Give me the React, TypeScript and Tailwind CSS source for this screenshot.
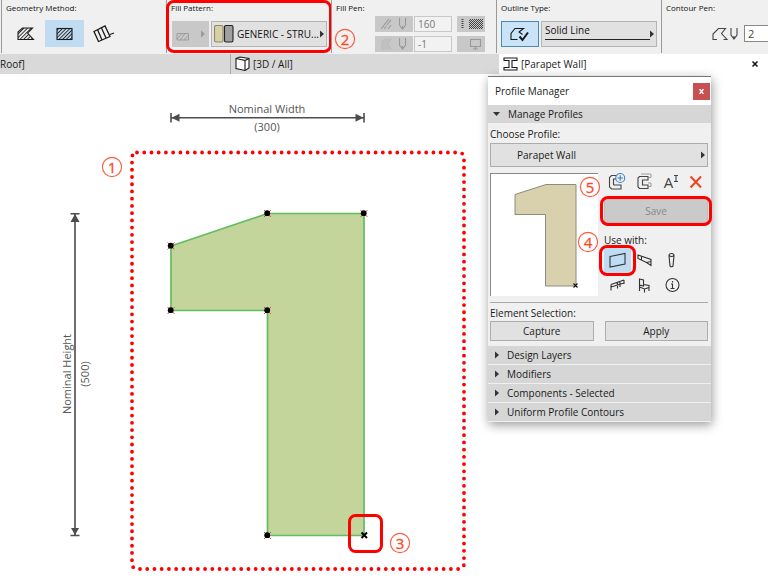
import { useState } from "react";
import type { ReactNode } from "react";

function Arrow({ className = "" }: { className?: string }) {
  return (
    <svg width="4" height="8" viewBox="0 0 4 8" className={`shrink-0 ${className}`} aria-hidden="true">
      <path d="M0 0.5 L4 4 L0 7.5Z" fill="currentColor" />
    </svg>
  );
}

function Callout({ n, x, y, className }: { n: number; x?: number; y?: number; className?: string }) {
  return (
    <svg x={x} y={y} width="22" height="22" viewBox="0 0 22 22" className={className}>
      <circle cx="11" cy="11" r="9.6" fill="none" stroke="#fb5a3c" strokeWidth="1.1" />
      <text x="11" y="16.5" textAnchor="middle" fontSize="15" fill="#fb4a2a" stroke="#fb4a2a" strokeWidth="0.3">
        {n}
      </text>
    </svg>
  );
}

function Icon({ w, h, children }: { w: number; h: number; children: ReactNode }) {
  return (
    <svg
      width={w}
      height={h}
      viewBox={`0 0 ${w} ${h}`}
      fill="none"
      stroke="currentColor"
      strokeWidth="1.1"
      className="shrink-0"
      aria-hidden="true"
    >
      {children}
    </svg>
  );
}

const Pen = () => <path d="M0.5 0 V7 L3.5 11 L6.5 7 V0 M3.5 8 V11" />;

function Group({ title, className, children }: { title: string; className: string; children: ReactNode }) {
  return (
    <section className={`relative flex h-[53px] shrink-0 border-l border-[#9a9a9a] pl-1 ${className}`}>
      <div className="flex w-full flex-col">
        <h2 className="h-4 text-[8px] leading-4 whitespace-nowrap text-[#111]">{title}</h2>
        {children}
      </div>
    </section>
  );
}

function Toolbar() {
  const [method, setMethod] = useState(1);
  const methods = [
    {
      name: "Polygonal",
      icon: (
        <Icon w={18} h={14}>
          <path d="M1 12.5 V5 L5.5 1 H15.5 L10.5 6 L16.5 12.5Z" fill="url(#hatch)" />
        </Icon>
      ),
    },
    {
      name: "Rectangular",
      icon: (
        <Icon w={18} h={14}>
          <rect x="1" y="1.5" width="15" height="11" fill="url(#hatch)" />
        </Icon>
      ),
    },
    {
      name: "Rotated rectangular",
      icon: (
        <Icon w={22} h={18}>
          <path d="M1 6.5 L12 1 L17 11.5 L5.5 16.5Z M4.5 4.5 L9 15 M8.5 3 L13 13" strokeWidth="1.3" />
          <path d="M17 9.5 L21 8" />
        </Icon>
      ),
    },
  ];

  return (
    <header className="flex h-[54px] overflow-hidden bg-[#f0f0f0]">
      <Group title="Geometry Method:" className="ml-px w-[165px]">
        <div className="flex pt-1">
          {methods.map((m, i) => (
            <button
              key={m.name}
              type="button"
              aria-label={m.name}
              onClick={() => setMethod(i)}
              className={`flex h-[27px] w-[39px] items-center justify-center ${i === method ? "bg-[#bfdcf2]" : ""}`}
            >
              {m.icon}
            </button>
          ))}
        </div>
      </Group>

      <Group title="Fill Pattern:" className="w-[165px]">
        <div className="flex gap-[2px] pt-[5px] pr-1 pl-px">
          <button
            type="button"
            disabled
            aria-label="Fill type"
            className="flex h-[26px] w-[37px] items-center justify-between bg-[#c8c8c8] pr-1 pl-1 text-[#999]"
          >
            <Icon w={14} h={14}>
              <path d="M1 6.5 H12.5 V13 H1Z M1 12 L6 6.5 M4 13 L9 6.5 M8 13 L12.5 8" strokeWidth="0.9" />
            </Icon>
            <Arrow />
          </button>
          <div className="flex h-[26px] min-w-0 flex-1 items-center border border-[#b4b4b4] bg-[#e1e1e1] pr-[2px] pl-[2px] text-[#333]">
            <Icon w={20} h={18}>
              <rect x="0.5" y="0.5" width="8.5" height="16.5" rx="1.5" fill="#d5d0a6" stroke="#8b886c" />
              <rect x="10.5" y="0.5" width="8.5" height="16.5" rx="1.5" fill="#a0a0a0" stroke="#222" />
            </Icon>
            <select
              aria-label="Fill pattern"
              className="min-w-0 flex-1 appearance-none pl-[3px] text-[10px] text-[#111] outline-none"
            >
              <option>GENERIC - STRU...</option>
            </select>
            <Arrow />
          </div>
        </div>
        <div className="absolute top-0 -left-px h-[53px] w-[166px] rounded-lg border-[3px] border-[#fe0000]" />
      </Group>

      <Group title="Fill Pen:" className="w-[165px]">
        <Callout n={2} className="absolute top-7 left-[2px]" />
        <div className="grid grid-cols-[38px_39px_28px] gap-y-1 pl-[39px] text-[#999]">
          <button type="button" disabled aria-label="Foreground pen" className="flex h-4 items-center justify-center bg-[#c8c8c8]">
            <Icon w={26} h={12}>
              <path d="M0 11 L8 1 M3 11 L5.5 8 M6 7 L10 2 M7 11 L10 7" />
              <g transform="translate(18)"><Pen /></g>
            </Icon>
          </button>
          <input
            aria-label="Foreground pen number"
            disabled
            defaultValue="160"
            className="ml-px h-4 w-[38px] border border-[#c8c8c8] bg-[#f2f2f2] px-[3px] text-[10px] text-[#777]"
          />
          <button type="button" disabled aria-label="Fill preview" className="ml-[5px] flex h-4 w-7 items-center justify-center bg-[#c8c8c8]">
            <Icon w={23} h={10}>
              <path d="M2.5 0 V10" stroke="#444" strokeWidth="2" strokeDasharray="1 1" />
              <rect x="9" y="0" width="14" height="10" fill="url(#dots)" stroke="none" />
            </Icon>
          </button>
          <button type="button" disabled aria-label="Background pen" className="flex h-4 items-center justify-center bg-[#c8c8c8]">
            <Icon w={26} h={12}>
              <path d="M0 11 V5 L4 1 H10 L7 6 L10 11Z" fill="#c0c0c0" stroke="#bdbdbd" />
              <g transform="translate(18)"><Pen /></g>
            </Icon>
          </button>
          <input
            aria-label="Background pen number"
            disabled
            defaultValue="-1"
            className="ml-px h-4 w-[38px] border border-[#c8c8c8] bg-[#f2f2f2] px-[3px] text-[10px] text-[#777]"
          />
          <button type="button" disabled aria-label="Screen" className="ml-[5px] flex h-4 w-7 items-center justify-end bg-[#c8c8c8] pr-1">
            <Icon w={11} h={12}>
              <path d="M0.5 1.5 H10.5 V8.5 H0.5Z M5.5 8.5 V11 M3 11 H8" />
            </Icon>
          </button>
        </div>
      </Group>

      <Group title="Outline Type:" className="w-[165px]">
        <div className="flex gap-[2px] pt-[5px] pr-1">
          <button
            type="button"
            aria-label="Outline on"
            className="flex h-[26px] w-[38px] items-center justify-center border border-[#4a89b4] bg-[#c9e3f8]"
          >
            <Icon w={20} h={15}>
              <path d="M7.5 12.5 H1 V6.5 L5 1.5 H13.5 L9 5 L12.5 7.5" />
              <path d="M9.5 9.5 L12.5 13 L18 5.5" strokeWidth="2" />
            </Icon>
          </button>
          <div className="flex h-[26px] min-w-0 flex-1 items-center border border-[#b4b4b4] bg-[#e1e1e1] pr-[2px] pl-[3px]">
            <select
              aria-label="Outline line type"
              className="mb-1 h-4 min-w-0 flex-1 appearance-none border-b border-[#222] pb-1 text-[10px] leading-3 text-[#111] outline-none"
            >
              <option>Solid Line</option>
            </select>
            <Arrow className="text-[#333]" />
          </div>
        </div>
      </Group>

      <Group title="Contour Pen:" className="min-w-[107px] flex-1">
        <div className="flex items-center gap-[6px] pt-[9px] pl-[46px] text-[#444]">
          <Icon w={26} h={14}>
            <path d="M5 12.5 H1 V7 L6.5 1.5 H13.5 L9.5 6.5 L15 12.5 H11.5" />
            <g transform="translate(18.5 1)"><Pen /></g>
          </Icon>
          <input
            aria-label="Contour pen number"
            defaultValue="2"
            className="h-[17px] w-10 shrink-0 border border-[#888] bg-white px-[3px] text-[11px]"
          />
        </div>
      </Group>
    </header>
  );
}

function TabBar() {
  return (
    <nav className="flex h-5 bg-[#d9d9d9] text-[10px] leading-5 whitespace-nowrap">
      <button type="button" className="w-[230px] text-left">Roof]</button>
      <button type="button" className="flex w-[269px] items-center gap-[3px] border-l border-[#aaa] pl-1">
        <Icon w={15} h={16}>
          <path d="M1 2.5 L5 1 L14 2.5 V12 L10 14.5 L1 12.5Z" fill="#fff" />
          <path d="M1 2.5 L10 4.5 V14.5 M10 4.5 L14 2.5" />
        </Icon>
        [3D / All]
      </button>
      <div className="flex flex-1 items-center bg-white pr-2 pl-1">
        <button type="button" className="flex flex-1 items-center gap-[3px]">
          <Icon w={15} h={14}>
            <path d="M1 1 H14 V3.5 H9 V10.5 H14 V13 H1 V10.5 H6 V3.5 H1Z" />
          </Icon>
          [Parapet Wall]
        </button>
        <button type="button" aria-label="Close tab" className="flex w-[10px] justify-center">
          <Icon w={6} h={6}><path d="M0.5 0.5 L5.5 5.5 M5.5 0.5 L0.5 5.5" stroke="#111" strokeWidth="1.5" /></Icon>
        </button>
      </div>
    </nav>
  );
}

const nodes = [
  [171, 246],
  [267.5, 213.5],
  [364, 213.5],
  [267.5, 310.5],
  [171, 310.5],
  [267.5, 535.5],
];

function Drawing() {
  return (
    <svg width="768" height="510" viewBox="0 74 768 510" className="block shrink-0">
      <g stroke="#4d4d4d" fill="#4d4d4d" strokeWidth="1.6">
        <path d="M171 117.7 H364 M171 113 V122.5 M364 113 V122.5 M75 213.8 V535.5 M70.5 213.8 H79.5 M70.5 535.5 H79.5" />
        <path d="M171.5 117.7 l8 -4 v8z M363.5 117.7 l-8 -4 v8z M75 214 l-4.5 8 h9z M75 535 l-4 -7 h8z" stroke="none" />
      </g>
      <g fill="#555" fontSize="11" textAnchor="middle">
        <text x="267" y="113">Nominal Width</text>
        <text x="267" y="131">(300)</text>
        <text transform="translate(71 374) rotate(-90)">Nominal Height</text>
        <text transform="translate(89 374) rotate(-90)">(500)</text>
      </g>

      <path
        d="M171 246 L267.5 213.5 H364 V535.5 H267.5 V310.5 H171Z"
        fill="#c3d59b"
        stroke="#62bd62"
        strokeWidth="1.7"
      />
      {nodes.map(([x, y]) => (
        <g key={`${x}-${y}`}>
          <path d={`M${x - 3.5} ${y - 3.5} l7 7 m0 -7 l-7 7`} stroke="#d9533f" />
          <circle cx={x - 0.3} cy={y - 0.3} r="2.9" fill="#000" />
        </g>
      ))}
      <path d="M361.5 532.5 l5.5 5.5 m0 -5.5 l-5.5 5.5" stroke="#000" strokeWidth="2" />

      <rect
        x="132"
        y="152.5"
        width="332"
        height="416.5"
        rx="5"
        fill="none"
        stroke="#fe0000"
        strokeWidth="3.8"
        strokeLinecap="round"
        strokeDasharray="0 7.23"
      />
      <rect x="349.5" y="515.5" width="32" height="36" rx="6" fill="none" stroke="#fe0000" strokeWidth="3" />
      <Callout n={1} x={101} y={156} />
      <Callout n={3} x={389} y={532} />
    </svg>
  );
}

const uses = [
  { name: "Wall", d: "M1 4.5 L16 1.5 V12 L1 15Z" },
  { name: "Beam", d: "M2 3 L15 7.5 V13.5 L10.5 10.5 L2 6.5Z M5.5 8 V4.5 M10.5 10.5 L15 9.5" },
  { name: "Column", d: "M5 3.5 Q5 1.5 7.5 1.5 Q10 1.5 10 3.5 L9 14 Q7.5 15.5 6 14Z M5 3.5 Q7.5 5.5 10 3.5" },
  { name: "Railing", d: "M2 7.5 L15 3 M2 10 L15 6 M2 7.5 V13.5 M8.5 5 V11.5 M11 4.5 V10 M15 3 V7" },
  { name: "Object", d: "M3.5 2 L7.5 3 V9 L3.5 8Z M3.5 8 V14 M7.5 7.5 L13 8.5 V10.5 L8.5 12 L3.5 10 M8.5 12 V15.5 M13 10 V14" },
  { name: "Info", d: "M8.5 1.5 A6.5 6.5 0 1 0 8.5 14.5 A6.5 6.5 0 1 0 8.5 1.5 M7 7 H8.5 V11.5 M6.5 11.5 H10.5 M8.5 4 V5.5" },
];

const closedSections = ["Design Layers", "Modifiers", "Components - Selected", "Uniform Profile Contours"];

function ProfileManager() {
  const [use, setUse] = useState("Wall");

  return (
    <aside className="absolute top-[2px] left-[488px] w-[223px] border-t border-[#777] bg-[#f0f0f0] text-[10px] text-[#1a1a1a] shadow-[1px_3px_10px_rgba(0,0,0,0.4)]">
      <div className="flex h-7 items-center justify-between bg-white pr-px pl-[7px]">
        <h1>Profile Manager</h1>
        <button type="button" aria-label="Close" className="flex h-[17px] w-[17px] items-center justify-center bg-[#c75050] text-white">
          <Icon w={5} h={5}><path d="M0.5 0 L4.5 5 M4.5 0 L0.5 5" strokeWidth="1.4" /></Icon>
        </button>
      </div>
      <button type="button" className="flex h-[18px] w-full items-center gap-2 bg-[#d6d6d6] pl-[5px]">
        <svg width="7" height="4" viewBox="0 0 7 4" aria-hidden="true"><path d="M0 0 H7 L3.5 4Z" fill="#333" /></svg>
        Manage Profiles
      </button>

      <div className="pr-[3px] pl-[2px]">
        <label htmlFor="profile" className="block h-5 pt-[2px] leading-[18px]">Choose Profile:</label>
        <div className="flex h-6 items-center border border-[#adadad] bg-[#e1e1e1] pr-[2px]">
          <select id="profile" className="flex-1 appearance-none pl-[26px] outline-none">
            <option>Parapet Wall</option>
          </select>
          <Arrow className="text-[#333]" />
        </div>

        <div className="flex gap-[6px] border-b border-[#aaa] pt-[6px] pb-1">
          <div className="h-[123px] w-[108px] shrink-0 border-t border-l border-[#888] bg-white">
            <svg width="107" height="122" viewBox="0 0 107 122">
              <path d="M24 20.5 L55 10.5 H85 V112 H54.5 V40.5 H24Z" fill="#d9d1ae" stroke="#8d8a7e" />
              <path d="M82.5 109.5 l4 4 m0 -4 l-4 4" stroke="#111" strokeWidth="1.1" />
            </svg>
          </div>
          <div className="flex min-w-0 flex-1 flex-col">
            <div className="flex h-[26px] items-start justify-between pr-[5px] pl-1 text-[#444]">
              <button type="button" aria-label="New profile">
                <Icon w={18} h={18}>
                  <path d="M8 2.5 H3.5 L1.5 4.5 V14 L3.5 16 H13 V12 H6 L5.5 11.5 V6 H8" />
                  <circle cx="12.2" cy="5" r="4.5" stroke="#4285c4" />
                  <path d="M12.2 2.2 V7.8 M9.4 5 H15" stroke="#2f7bc8" />
                </Icon>
              </button>
              <button type="button" aria-label="Duplicate profile">
                <Icon w={18} h={18}>
                  <path d="M3.5 3.5 H12 V7 H6.5 V12 H12 V15.5 H3.5 L2 14 V5Z" />
                  <path d="M5 1 H15 V4.5 H12 M12 10 H15 V13.5 H12" strokeWidth="0.8" stroke="#888" />
                </Icon>
              </button>
              <button type="button" aria-label="Rename profile" className="flex pt-[2px] text-[15px] leading-[14px]">
                A
                <Icon w={6} h={8}><path d="M1 0.5 H5 M3 0.5 V6.5 M1 6.5 H5" /></Icon>
              </button>
              <button type="button" aria-label="Delete profile" className="pt-[2px]">
                <Icon w={14} h={14}><path d="M1.5 1.5 L12 12.5 M12 1.5 L1.5 12.5" stroke="#ee4422" strokeWidth="2" /></Icon>
              </button>
            </div>
            <div className="relative">
              <button type="button" disabled className="h-6 w-full border border-[#bbb] bg-[#cacaca] text-[#888]">
                Save
              </button>
              <div className="absolute -top-[3px] -left-1 h-[30px] w-[112px] rounded-lg border-[3px] border-[#fe0000]" />
              <Callout n={5} className="absolute -top-[23px] -left-[25px]" />
            </div>
            <h3 className="pt-[9px] leading-4">Use with:</h3>
            <div className="relative grid w-[82px] grid-cols-3 text-[#333]">
              {uses.map((u) => (
                <button
                  key={u.name}
                  type="button"
                  aria-label={u.name}
                  onClick={() => setUse(u.name)}
                  className={`flex h-[25px] items-center justify-center ${u.name === use ? "bg-[#bfdcf2]" : ""}`}
                >
                  <Icon w={17} h={17}><path d={u.d} /></Icon>
                </button>
              ))}
              <div className="absolute -top-[3px] -left-[5px] h-[31px] w-[37px] rounded-lg border-[3px] border-[#fe0000]" />
              <Callout n={4} className="absolute -top-[17px] -left-[27px]" />
            </div>
          </div>
        </div>

        <h3 className="pt-[2px] leading-4">Element Selection:</h3>
        <div className="flex gap-[11px] pb-[5px]">
          <button type="button" className="h-5 flex-1 border border-[#adadad] bg-[#e1e1e1]">Capture</button>
          <button type="button" className="h-5 flex-1 border border-[#adadad] bg-[#e1e1e1]">Apply</button>
        </div>
      </div>

      <div className="flex flex-col gap-px pb-px">
        {closedSections.map((s) => (
          <button key={s} type="button" className="flex h-[18px] items-center gap-2 bg-[#d6d6d6] pl-[7px]">
            <Arrow className="text-[#333]" />
            {s}
          </button>
        ))}
      </div>
    </aside>
  );
}

export default function App() {
  return (
    <div className="flex min-h-screen flex-col overflow-hidden bg-white font-['Open_Sans','Noto_Sans',sans-serif] text-[#1a1a1a]">
      <svg width="0" height="0" className="absolute" aria-hidden="true">
        <defs>
          <pattern id="hatch" width="2.6" height="2.6" patternUnits="userSpaceOnUse" patternTransform="rotate(45)">
            <path d="M0.5 0 V2.6" stroke="#222" strokeWidth="0.9" />
          </pattern>
          <pattern id="dots" width="2" height="2" patternUnits="userSpaceOnUse">
            <path d="M0 0 H1 V1 H0Z M1 1 H2 V2 H1Z" fill="#444" />
          </pattern>
        </defs>
      </svg>
      <Toolbar />
      <TabBar />
      <main className="relative flex-1">
        <Drawing />
        <ProfileManager />
      </main>
    </div>
  );
}
